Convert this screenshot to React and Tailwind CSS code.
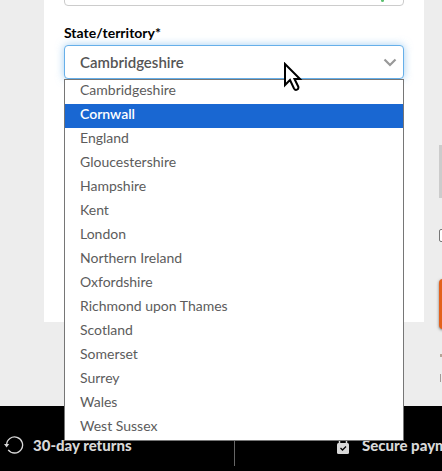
import React, { useState } from 'react';

const counties = [
  'Cambridgeshire',
  'Cornwall',
  'England',
  'Gloucestershire',
  'Hampshire',
  'Kent',
  'London',
  'Northern Ireland',
  'Oxfordshire',
  'Richmond upon Thames',
  'Scotland',
  'Somerset',
  'Surrey',
  'Wales',
  'West Sussex',
];

const ReturnIcon = () => (
  <svg width="20" height="20" viewBox="0 0 20 20" fill="none" stroke="#d8d8d8" aria-hidden="true">
    <path d="M2.6 10a8 8 0 1 1 1.6 4.8" strokeWidth="1.3" />
    <path d="M0 9h5.2L2.6 12.5z" fill="#d8d8d8" stroke="none" />
  </svg>
);

const LockIcon = () => (
  <svg width="14" height="18" viewBox="0 0 14 18" fill="none" aria-hidden="true">
    <path d="M3.5 8V4.5a3.5 3.5 0 0 1 7 0V8" stroke="#d8d8d8" strokeWidth="1.5" />
    <rect x="1" y="7" width="12" height="11" rx="1.5" fill="#d8d8d8" />
    <path d="m4.5 12 2 2 3.5-3.5" stroke="#000" strokeWidth="1.3" />
  </svg>
);

const Cursor = () => (
  <svg className="pointer-events-none absolute left-[219px] top-[17px] z-20" width="20" height="30" viewBox="0 0 20 30" aria-hidden="true">
    <path d="M2 2v21l5-5 4 8.5q1.2 2 3 1.2t1.3-3L11.5 17H17z" fill="#fff" stroke="#000" strokeWidth="2" />
  </svg>
);

const CountySelect = () => {
  const [county, setCounty] = useState('Cambridgeshire');
  const [active, setActive] = useState('Cornwall');

  return (
    <div className="relative">
      <select
        id="county"
        value={county}
        onChange={(e) => setCounty(e.target.value)}
        className="block h-[34px] w-full appearance-none rounded border border-[#66afe9] bg-white px-[15px] text-[15px] font-semibold text-[#555] shadow-[0_0_8px_rgba(102,175,233,0.6)] outline-none"
      >
        {counties.map((name) => <option key={name}>{name}</option>)}
      </select>
      <svg className="pointer-events-none absolute right-[7px] top-[13px]" width="14" height="10" viewBox="0 0 14 10" fill="none" aria-hidden="true">
        <path d="m1.5 1.5 5.5 5.5 5.5-5.5" stroke="#999" strokeWidth="2.2" />
      </svg>
      <ul role="listbox" aria-label="State/territory" className="absolute inset-x-0 top-full z-10 border border-[#767676] bg-white text-sm text-[#5c5c5c]">
        {counties.map((name) => (
          <li
            key={name}
            role="option"
            aria-selected={name === active}
            onMouseEnter={() => setActive(name)}
            onClick={() => setCounty(name)}
            className={`h-6 px-[15px] leading-5 ${name === active ? 'bg-[#1967d2] font-semibold text-white' : ''}`}
          >
            {name}
          </li>
        ))}
      </ul>
      <Cursor />
    </div>
  );
};

const App = () => (
  <div className="overflow-hidden bg-[#ededed] font-['Lato',sans-serif]">
    <main className="flex items-start pl-11">
      <form className="h-[322px] min-w-0 flex-1 bg-white px-5">
        <div className="relative -mt-7">
          <input aria-label="Town/city" className="block h-[34px] w-full rounded border border-[#ccc] bg-white px-[15px]" />
          <span className="absolute bottom-1 right-5 size-[3px] rounded-full bg-[#5cc070]" />
        </div>
        <label htmlFor="county" className="mt-[18px] mb-[3px] block text-sm leading-[18px] font-bold text-black">State/territory*</label>
        <CountySelect />
      </form>
      <aside className="ml-[15px] w-[3px] shrink-0 pt-[145px] pb-6">
        <div className="h-[53px] w-60 bg-[#ccc]" />
        <input type="checkbox" aria-label="Accept terms" className="mt-[31px] block size-[13px] appearance-none rounded-xs border border-[#767676] bg-white" />
        <button type="button" aria-label="Continue" className="mt-[37px] block h-[50px] w-60 rounded bg-[#e3611c] shadow-[0_1px_3px_rgba(0,0,0,0.5)]" />
        <div className="mt-[25px] ml-px h-[3px] w-[2px] bg-[#b5a598]" />
        <div className="mt-[17px] ml-px h-2 w-px bg-[#a39a98]" />
      </aside>
    </main>
    <footer className="flex h-[65px] items-start bg-black text-[15px] font-black text-[#d8d8d8]">
      <div className="flex h-[60px] w-[235px] shrink-0 items-center gap-[9px] border-r border-[#666] pl-1 pt-[18px]">
        <ReturnIcon />
        <span>30-day returns</span>
      </div>
      <div className="flex h-[60px] shrink-0 items-center gap-3 pl-[101px] pt-[18px] whitespace-nowrap">
        <LockIcon />
        <span>Secure payment</span>
      </div>
    </footer>
  </div>
);

export default App;
